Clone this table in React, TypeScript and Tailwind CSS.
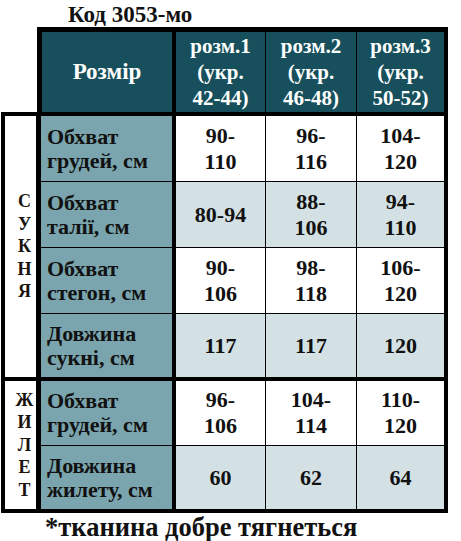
const COLS = ['розм.1', 'розм.2', 'розм.3'];
const SUBS = ['42-44)', '46-48)', '50-52)'];

type Row = { label: [string, string]; vals: [string, string][]; h: string; light: boolean };

const DRESS: Row[] = [
  { label: ['Обхват', 'грудей, см'], vals: [['90-', '110'], ['96-', '116'], ['104-', '120']], h: 'h-[66px]', light: false },
  { label: ['Обхват', 'талії, см'], vals: [['80-94', ''], ['88-', '106'], ['94-', '110']], h: 'h-[66px]', light: true },
  { label: ['Обхват', 'стегон, см'], vals: [['90-', '106'], ['98-', '118'], ['106-', '120']], h: 'h-[66px]', light: false },
  { label: ['Довжина', 'сукні, см'], vals: [['117', ''], ['117', ''], ['120', '']], h: 'h-[63px]', light: true },
];

const VEST: Row[] = [
  { label: ['Обхват', 'грудей, см'], vals: [['96-', '106'], ['104-', '114'], ['110-', '120']], h: 'h-[65px]', light: false },
  { label: ['Довжина', 'жилету, см'], vals: [['60', ''], ['62', ''], ['64', '']], h: 'h-[63px]', light: true },
];

function Value({ v }: { v: [string, string] }) {
  return (
    <div className="flex flex-col items-center justify-center text-[22px] leading-[26px] text-[#111]">
      <span>{v[0]}</span>
      {v[1] && <span>{v[1]}</span>}
    </div>
  );
}

function TableRow({ row, last }: { row: Row; last: boolean }) {
  const bg = row.light ? 'bg-[#d4e1e4]' : 'bg-white';
  return (
    <div className={`flex box-border ${row.h} ${last ? '' : 'border-b border-black'}`}>
      <div className="w-[135px] shrink-0 box-border bg-[#7aa5ae] border-r-4 border-black flex flex-col justify-center pl-[6px] text-[22px] leading-[24px] text-[#111] whitespace-nowrap">
        <span>{row.label[0]}</span>
        <span>{row.label[1]}</span>
      </div>
      <div className={`w-[90px] shrink-0 box-border ${bg} border-r border-black flex items-center justify-center`}>
        <Value v={row.vals[0]} />
      </div>
      <div className={`w-[91px] shrink-0 box-border ${bg} border-r border-black flex items-center justify-center`}>
        <Value v={row.vals[1]} />
      </div>
      <div className={`flex-1 ${bg} flex items-center justify-center`}>
        <Value v={row.vals[2]} />
      </div>
    </div>
  );
}

function Section({ letters, rows }: { letters: string; rows: Row[] }) {
  return (
    <div className="flex">
      <div className="w-[36px] shrink-0 box-border bg-white border-r-[5px] border-black flex flex-col items-center justify-center pl-[8px] text-[18px] leading-[22.5px] text-[#1a140e]">
        {letters.split('').map((l, i) => (
          <span key={i}>{l}</span>
        ))}
      </div>
      <div className="flex-1 flex flex-col">
        {rows.map((r, i) => (
          <TableRow key={i} row={r} last={i === rows.length - 1} />
        ))}
      </div>
    </div>
  );
}

export default function App() {
  return (
    <div className="w-[461px] h-[541px] bg-white font-['Liberation_Serif',serif] font-bold overflow-hidden">
      <div className="h-[27px] pt-[2px] pl-[68px] text-[23px] leading-[25px] text-[#111]">Код 3053-мо</div>

      <div className="ml-[37px] w-[411px] box-border border-t-[5px] border-l-[5px] border-r-4 border-black flex h-[85px] bg-[#17505c] text-white">
        <div className="w-[134px] shrink-0 box-border border-r-4 border-black flex items-center justify-center text-[23px]">
          Розмір
        </div>
        {COLS.map((c, i) => (
          <div
            key={c}
            className={`${i === 0 ? 'w-[90px] border-r' : i === 1 ? 'w-[91px] border-r' : 'flex-1'} shrink-0 box-border border-black flex flex-col items-center justify-center text-[21px] leading-[26px]`}
          >
            <span>{c}</span>
            <span>(укр.</span>
            <span>{SUBS[i]}</span>
          </div>
        ))}
      </div>

      <div className="ml-[1px] w-[447px] box-border border-4 border-black">
        <Section letters="СУКНЯ" rows={DRESS} />
        <div className="h-[4px] bg-black" />
        <Section letters="ЖИЛЕТ" rows={VEST} />
      </div>

      <div className="pl-[45px] text-[26.5px] leading-[28px] text-[#111]">*тканина добре тягнеться</div>
    </div>
  );
}
